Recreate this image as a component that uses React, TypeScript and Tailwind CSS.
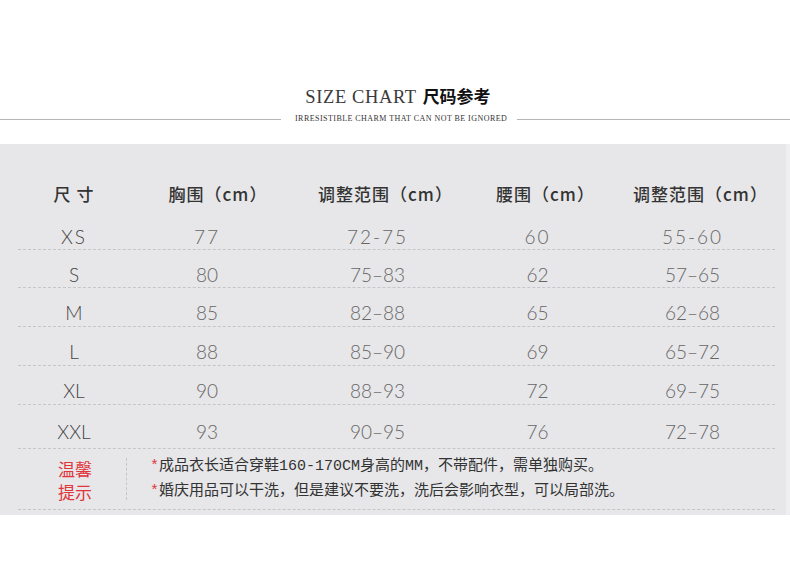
import React from 'react';

const rows = [
  ['XS', '77', '72-75', '60', '55-60'],
  ['S', '80', '75–83', '62', '57–65'],
  ['M', '85', '82–88', '65', '62–68'],
  ['L', '88', '85–90', '69', '65–72'],
  ['XL', '90', '88–93', '72', '69–75'],
  ['XXL', '93', '90–95', '76', '72–78'],
];

const heights = ['h-[38px]', 'h-[38px]', 'h-[39px]', 'h-[39px]', 'h-[39px]', 'h-[44px]'];

const headers = ['尺 寸', '胸围（cm）', '调整范围（cm）', '腰围（cm）', '调整范围（cm）'];

const grid = 'grid grid-cols-[112px_160px_175px_145px_165px]';

export default function App() {
  return (
    <div className="w-[790px] h-[562px] bg-white overflow-hidden">
      {/* title */}
      <div className="pt-[86px] flex justify-center items-baseline gap-[6px] pl-[6px]">
        <span className="text-[18.5px] leading-[20px] text-[#3a3a3a] tracking-[0.6px] [font-family:'Liberation_Serif',serif]">
          SIZE CHART
        </span>
        <span className="text-[17px] leading-[20px] font-bold text-[#111] [font-family:'Noto_Sans_CJK_SC',sans-serif]">
          尺码参考
        </span>
      </div>
      <div className="mt-[7px] flex items-center">
        <div className="w-[281px] h-px bg-[#b5b5b5]" />
        <span className="pl-[14px] pr-[10px] text-[8px] leading-[10px] tracking-[0.45px] text-[#333] [font-family:'Liberation_Serif',serif]">
          IRRESISTIBLE CHARM THAT CAN NOT BE IGNORED
        </span>
        <div className="flex-1 h-px bg-[#b5b5b5]" />
      </div>

      {/* panel */}
      <div className="mt-[20px] h-[371px] bg-[#efeff1]">
        <div className="h-full w-[786px] bg-[#e7e7e9] pl-[18px] pr-[11px]">
          <div className={`${grid} h-[68px] pt-[38px] text-[17px] leading-[24px] font-medium tracking-[1px] text-[#333] [font-family:'Noto_Sans_CJK_SC',sans-serif]`}>
            {headers.map((h, i) => (
              <div key={i} className={`text-center ${i === 0 ? '' : 'pl-[16px]'}`}>
                {h}
              </div>
            ))}
          </div>
          {rows.map((r, i) => (
            <div
              key={r[0]}
              className={`${grid} ${heights[i]} items-center pt-[11px] border-b border-dashed border-[#c6c6c8] text-[19px] font-light text-[#666] [font-family:'Lato',sans-serif] ${i === 0 ? 'tracking-[2px]' : ''}`}
            >
              {r.map((c, j) => (
                <div key={j} className={`text-center ${j === 1 ? 'pr-[6px]' : ''} ${j === 0 ? 'text-[#444]' : ''}`}>
                  {c}
                </div>
              ))}
            </div>
          ))}
          <div className="flex h-[61px] border-b border-dashed border-[#c6c6c8]">
            <div className="w-[108px] pl-[6px] flex flex-col items-center justify-center pt-[2px] text-[17px] leading-[23px] text-[#e0353b] [font-family:'Noto_Sans_CJK_SC',sans-serif]">
              <div>温馨</div>
              <div>提示</div>
            </div>
            <div className="my-[9px] border-l border-dashed border-[#c6c6c8]" />
            <div className="pl-[23px] flex flex-col justify-center text-[15px] leading-[25px] text-[#333] [font-family:'Liberation_Mono','Noto_Sans_CJK_SC',monospace]">
              <div>
                <span className="text-[#e0353b]">*</span>成品衣长适合穿鞋160-170CM身高的MM，不带配件，需单独购买。
              </div>
              <div>
                <span className="text-[#e0353b]">*</span>婚庆用品可以干洗，但是建议不要洗，洗后会影响衣型，可以局部洗。
              </div>
            </div>
          </div>
        </div>
      </div>
    </div>
  );
}
